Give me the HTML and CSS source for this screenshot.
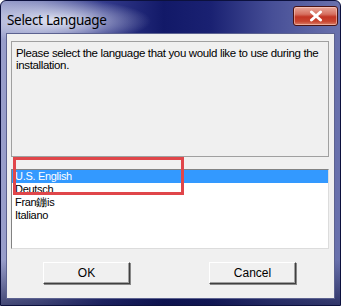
FILE: index.html
```html
<!DOCTYPE html>
<html lang="en">
<head>
  <meta charset="UTF-8">
  <title>Select Language</title>
  <link rel="stylesheet" href="styles.css">
</head>
<body>

  <div class="window">
    <!-- title bar -->
    <div class="titlebar">
      <span class="title">Select Language</span>
      <span class="close">
        <svg width="14" height="12" viewBox="0 0 14 12">
          <path d="M2.5 2 L11.5 10 M11.5 2 L2.5 10" stroke="#fff" stroke-width="3" stroke-linecap="round"/>
        </svg>
      </span>
    </div>

    <!-- dialog body -->
    <div class="client">
      <div class="prompt">Please select the language that you would like to use during the installation.</div>

      <ul class="langs">
        <li class="selected">U.S. English</li>
        <li>Deutsch</li>
        <li>Fran鏰is</li>
        <li>Italiano</li>
      </ul>

      <div class="buttons">
        <button class="btn">OK</button>
        <button class="btn">Cancel</button>
      </div>

      <!-- red annotation box -->
      <div class="mark"></div>
    </div>
  </div>

</body>
</html>
```

FILE: styles.css
```css
* { box-sizing: border-box; }
body {
  margin: 0;
  background: #fff;
  font-family: 'Liberation Sans', Arial, sans-serif;
}
.window {
  width: 341px;
  height: 306px;
  padding: 0 5px 6px 5px;
  border: 1px solid #0c113e;
  border-radius: 6px 6px 0 0;
  background:
    radial-gradient(ellipse 95px 22px at 55px 20px, rgba(232,235,247,0.95), rgba(232,235,247,0) 100%),
    linear-gradient(to bottom, rgba(0,0,0,0) 85%, rgba(10,14,60,0.6) 100%),
    linear-gradient(to right, #9aa0cc 0%, #7e85bb 12%, #343b8c 30%, #121968 48%, #1a2172 62%, #474f97 80%, #6a72ad 100%);
  display: flex;
  flex-direction: column;
  position: relative;
}
.titlebar {
  height: 32px;
  display: flex;
  align-items: flex-start;
  justify-content: space-between;
}
.title {
  font-family: 'Noto Sans', 'Open Sans', sans-serif;
  font-size: 13.5px;
  letter-spacing: -0.3px;
  line-height: 20px;
  padding: 9px 0 0 1px;
  color: #000;
}
.close {
  width: 45px;
  height: 20px;
  margin: 5px -3px 0 0;
  border: 1px solid #4a1212;
  border-radius: 3px;
  background: linear-gradient(to bottom, #e9a79a 0%, #d67060 40%, #c23524 55%, #c84530 80%, #d9806a 100%);
  box-shadow: inset 0 0 0 1px rgba(255,220,210,0.5);
  display: flex;
  align-items: center;
  justify-content: center;
}
.client {
  flex: 1;
  background: #f0f0f0;
  padding: 7px 5px 0 4px;
  border: 1px solid #5c6290;
  display: flex;
  flex-direction: column;
  position: relative;
}
.prompt {
  height: 116px;
  border: 1px solid #a0a0a0;
  padding: 5px 4px;
  font-size: 11.5px;
  line-height: 12px;
  letter-spacing: -0.35px;
  color: #000;
}
.langs {
  list-style: none;
  margin: 12px 0 0 0;
  padding: 0;
  height: 80px;
  background: #fff;
  border: 1px solid #dcdcdc;
  border-top-color: #828282;
  border-left-color: #828282;
  font-size: 11px;
  letter-spacing: -0.3px;
  color: #000;
}
.langs li {
  height: 13px;
  line-height: 13px;
  padding-left: 3px;
}
.langs li.selected {
  background: #3399ff;
  color: #fff;
}
.buttons {
  display: flex;
  gap: 79px;
  padding-left: 32px;
  margin-top: 13px;
}
.btn {
  width: 87px;
  height: 22px;
  background: #f0f0f0;
  border: 1px solid;
  border-color: #fff #404040 #404040 #fff;
  box-shadow: inset -1px -1px 0 #a0a0a0, 1px 1px 0 #888;
  font-family: 'Liberation Sans', Arial, sans-serif;
  font-size: 12px;
  color: #000;
  padding: 0;
}

.mark {
  position: absolute;
  left: 6px;
  top: 123px;
  width: 171px;
  height: 38px;
  border: 3px solid #e0464a;
}
```
